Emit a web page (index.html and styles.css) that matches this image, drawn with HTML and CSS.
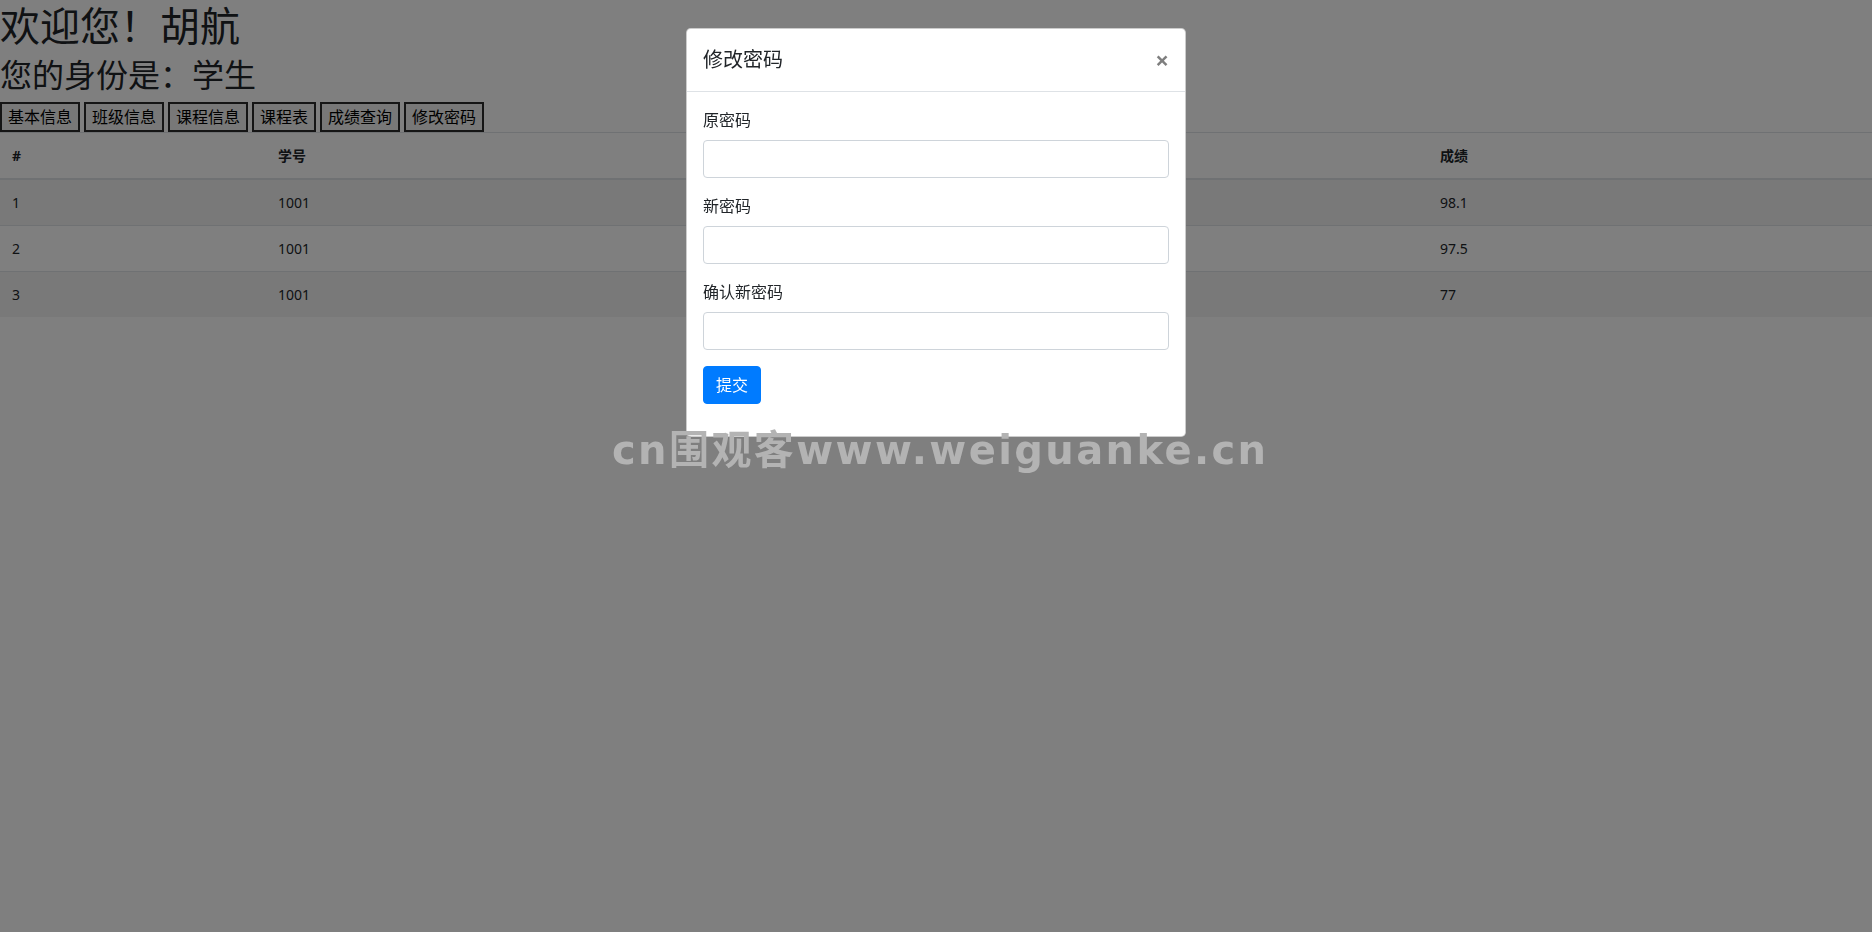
FILE: index.html
```html
<!DOCTYPE html>
<html lang="zh-CN">

<head>
    <meta charset="UTF-8">
    <meta name="viewport" content="width=device-width, initial-scale=1, shrink-to-fit=no">
    <title>学生信息管理系统</title>
    <link rel="stylesheet" href="styles.css">
</head>

<body>
    <h1 class="welcome">欢迎您！胡航</h1>
    <h2 class="role">您的身份是：学生</h2>

    <div class="menu">
        <button type="button">基本信息</button>
        <button type="button">班级信息</button>
        <button type="button">课程信息</button>
        <button type="button">课程表</button>
        <button type="button">成绩查询</button>
        <button type="button">修改密码</button>
    </div>

    <table class="table table-striped">
        <thead>
            <tr>
                <th class="col-index">#</th>
                <th class="col-id">学号</th>
                <th class="col-course">课程名称</th>
                <th class="col-score">成绩</th>
            </tr>
        </thead>
        <tbody>
            <tr>
                <td>1</td>
                <td>1001</td>
                <td>高等数学</td>
                <td>98.1</td>
            </tr>
            <tr>
                <td>2</td>
                <td>1001</td>
                <td>大学英语</td>
                <td>97.5</td>
            </tr>
            <tr>
                <td>3</td>
                <td>1001</td>
                <td>数据结构</td>
                <td>77</td>
            </tr>
        </tbody>
    </table>

    <div class="modal-backdrop"></div>

    <div class="modal">
        <div class="modal-dialog">
            <div class="modal-content">
                <div class="modal-header">
                    <h5 class="modal-title">修改密码</h5>
                    <button type="button" class="close">&times;</button>
                </div>
                <div class="modal-body">
                    <form>
                        <div class="form-group">
                            <label for="old-pwd">原密码</label>
                            <input type="password" class="form-control" id="old-pwd">
                        </div>
                        <div class="form-group">
                            <label for="new-pwd">新密码</label>
                            <input type="password" class="form-control" id="new-pwd">
                        </div>
                        <div class="form-group">
                            <label for="confirm-pwd">确认新密码</label>
                            <input type="password" class="form-control" id="confirm-pwd">
                        </div>
                        <div class="form-group">
                            <button type="button" class="btn btn-primary">提交</button>
                        </div>
                    </form>
                </div>
            </div>
        </div>
    </div>

    <div class="watermark">cn围观客www.weiguanke.cn</div>
</body>

</html>
```

FILE: styles.css
```css
*,
*::before,
*::after {
    box-sizing: border-box;
}

body {
    margin: 0;
    font-family: "Noto Sans", "Noto Sans CJK SC", sans-serif;
    font-size: 16px;
    line-height: 1.5;
    color: #212529;
    background-color: #fff;
}

h1, h2, h5 {
    margin-top: 0;
    margin-bottom: 8px;
    font-weight: 400;
    line-height: 1.2;
}

.welcome {
    padding-top: 2px;
    margin-bottom: 6px;
    font-size: 40px;
}

.role {
    font-size: 32px;
}

.menu {
    display: flex;
    gap: 4px;
}

.menu button {
    margin: 0;
    padding: 1px 6px;
    font-family: inherit;
    font-size: 16px;
    line-height: 1.5;
    color: #000;
    background-color: #f0f0f0;
    border: 2px solid #2a2a2a;
    border-radius: 0;
}

.table {
    width: 100%;
    margin-bottom: 16px;
    border-collapse: collapse;
    table-layout: fixed;
    font-size: 14px;
    color: #212529;
}

.table th,
.table td {
    padding: 12px;
    text-align: left;
    vertical-align: top;
    border-top: 1px solid #dee2e6;
}

.table thead th {
    font-weight: bold;
    vertical-align: bottom;
    border-bottom: 2px solid #dee2e6;
}

.table-striped tbody tr:nth-of-type(odd) {
    background-color: rgba(0, 0, 0, 0.05);
}

.col-index {
    width: 266px;
}

.col-id {
    width: 540px;
}

.col-score {
    width: 444px;
}

.modal-backdrop {
    position: fixed;
    top: 0;
    left: 0;
    width: 100vw;
    height: 100vh;
    background-color: #000;
    opacity: 0.5;
}

.modal {
    position: fixed;
    top: 0;
    left: 0;
    width: 100%;
    height: 100%;
}

.modal-dialog {
    max-width: 500px;
    margin: 28px auto;
}

.modal-content {
    display: flex;
    flex-direction: column;
    background-color: #fff;
    border: 1px solid rgba(0, 0, 0, 0.2);
    border-radius: 4.8px;
}

.modal-header {
    display: flex;
    align-items: flex-start;
    justify-content: space-between;
    padding: 16px;
    border-bottom: 1px solid #dee2e6;
}

.modal-title {
    margin: 0;
    font-size: 20px;
    line-height: 1.5;
}

.close {
    margin: -16px -16px -16px auto;
    padding: 19px 16px 13px;
    font-family: inherit;
    font-size: 24px;
    font-weight: 700;
    line-height: 1;
    color: #000;
    text-shadow: 0 1px 0 #fff;
    opacity: 0.5;
    background-color: transparent;
    border: 0;
}

.modal-body {
    padding: 16px;
}

form {
    margin: 0;
}

.form-group {
    margin-bottom: 16px;
}

.form-group label {
    display: inline-block;
    margin-bottom: 8px;
}

.form-control {
    display: block;
    width: 100%;
    height: 38px;
    padding: 6px 12px;
    font-family: inherit;
    font-size: 16px;
    line-height: 1.5;
    color: #495057;
    background-color: #fff;
    border: 1px solid #ced4da;
    border-radius: 4px;
}

.btn {
    display: inline-block;
    padding: 6px 12px;
    font-family: inherit;
    font-size: 16px;
    line-height: 1.5;
    border: 1px solid transparent;
    border-radius: 4px;
}

.btn-primary {
    color: #fff;
    background-color: #007bff;
    border-color: #007bff;
}

.watermark {
    position: absolute;
    top: 426px;
    left: 612px;
    font-family: "DejaVu Sans", "Noto Sans CJK SC", sans-serif;
    font-size: 40px;
    font-weight: bold;
    line-height: 1.2;
    letter-spacing: 2.4px;
    color: #b3b3b3;
    white-space: nowrap;
}
```
